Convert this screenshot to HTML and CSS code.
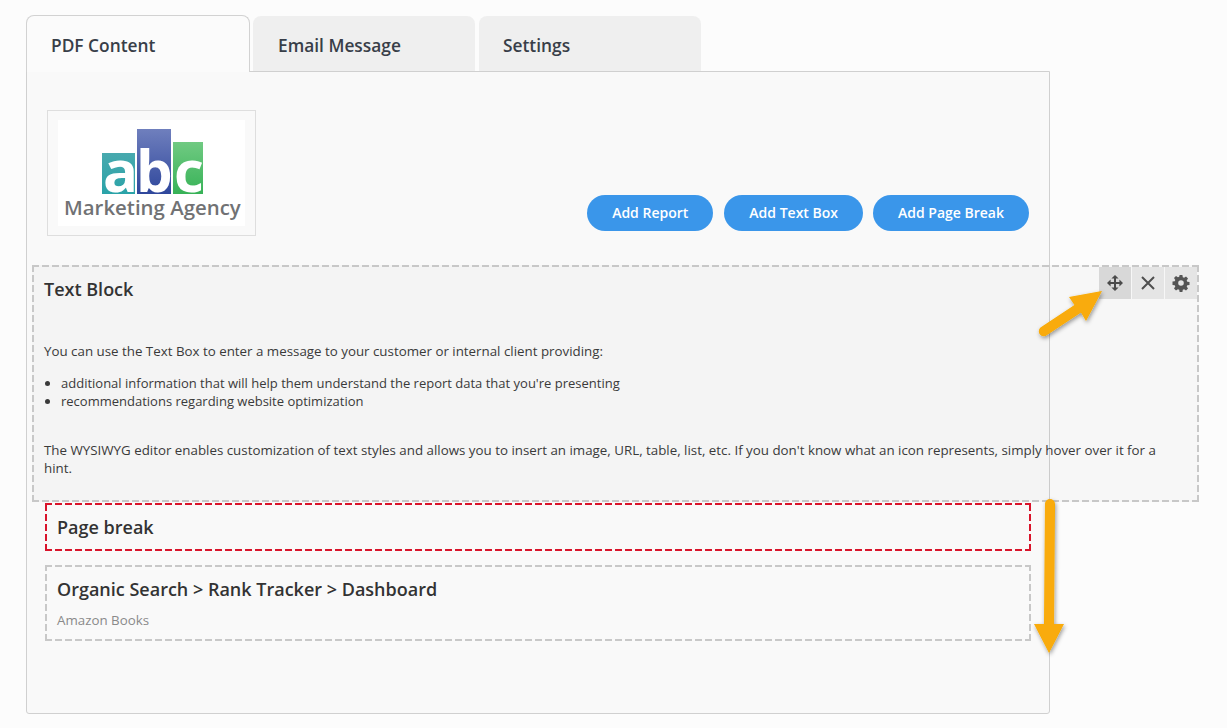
FILE: index.html
```html
<!DOCTYPE html>
<html lang="en">
<head>
    <meta charset="UTF-8">
    <meta name="viewport" content="width=device-width, initial-scale=1.0">
    <title>PDF Content</title>
    <link rel="stylesheet" href="styles.css">
</head>
<body>
    <div class="page">
        <div class="tabs">
            <div class="tab tab-active">PDF Content</div>
            <div class="tab">Email Message</div>
            <div class="tab">Settings</div>
        </div>

        <div class="panel">
            <div class="top-row">
                <div class="logo-box">
                    <svg class="logo" width="187" height="106" viewBox="58 120 187 106">
                        <defs>
                            <linearGradient id="teal" x1="0" y1="0" x2="0" y2="1">
                                <stop offset="0" stop-color="#48a9ae"/>
                                <stop offset="1" stop-color="#2aa3a8"/>
                            </linearGradient>
                            <linearGradient id="blue" x1="0" y1="0" x2="0" y2="1">
                                <stop offset="0" stop-color="#6f7fbd"/>
                                <stop offset="1" stop-color="#2f479c"/>
                            </linearGradient>
                            <linearGradient id="green" x1="0" y1="0" x2="0" y2="1">
                                <stop offset="0" stop-color="#70ca82"/>
                                <stop offset="1" stop-color="#37b257"/>
                            </linearGradient>
                        </defs>
                        <rect x="102" y="153" width="33" height="41" fill="url(#teal)"/>
                        <rect x="137" y="129" width="34" height="65" fill="url(#blue)"/>
                        <rect x="173" y="142" width="30" height="52" fill="url(#green)"/>
                        <text class="logo-abc" x="103" y="192">a<tspan dx="-2">b</tspan><tspan dx="1.300">c</tspan></text>
                        <text class="logo-name" x="64" y="215">Marketing Agency</text>
                    </svg>
                </div>
                <div class="actions">
                    <button class="btn">Add Report</button>
                    <button class="btn">Add Text Box</button>
                    <button class="btn">Add Page Break</button>
                </div>
            </div>

            <div class="block text-block">
                <div class="block-tools">
                    <div class="tool tool-on">
                        <svg width="18" height="18" viewBox="0 0 18 18"><path d="M9 1l3.600 3.600H10V8h3.400V5.400L17 9l-3.600 3.600V10H10v3.400h2.600L9 17l-3.600-3.600H8V10H4.600v2.600L1 9l3.600-3.600V8H8V4.600H5.400z" fill="#4a4a4a"/></svg>
                    </div>
                    <div class="tool">
                        <svg width="18" height="18" viewBox="0 0 18 18"><path d="M3 3l12 12M15 3L3 15" stroke="#4f4f4f" stroke-width="2" fill="none"/></svg>
                    </div>
                    <div class="tool">
                        <svg width="18" height="18" viewBox="0 0 18 18"><path fill-rule="evenodd" d="M7.600 1h2.800l.4 2.200 1.300.6 1.900-1.300 2 2-1.300 1.900.6 1.300 2.200.4v2.800l-2.200.4-.6 1.300 1.300 1.900-2 2-1.900-1.300-1.300.6-.4 2.200H7.600l-.4-2.200-1.300-.6-1.900 1.300-2-2 1.300-1.900-.6-1.300-2.200-.4V7.600l2.200-.4.6-1.300L2 4l2-2 1.900 1.300 1.300-.6zM9 6.200a2.800 2.800 0 1 0 0 5.600 2.800 2.800 0 0 0 0-5.600z" fill="#555"/></svg>
                    </div>
                </div>
                <h3 class="block-title">Text Block</h3>
                <p class="intro">You can use the Text Box to enter a message to your customer or internal client providing:</p>
                <ul class="points">
                    <li>additional information that will help them understand the report data that you're presenting</li>
                    <li>recommendations regarding website optimization</li>
                </ul>
                <p class="outro">The WYSIWYG editor enables customization of text styles and allows you to insert an image, URL, table, list, etc. If you don't know what an icon represents, simply hover over it for a hint.</p>
            </div>

            <div class="block page-break">
                <h3 class="block-title">Page break</h3>
            </div>

            <div class="block report-block">
                <h3 class="block-title">Organic Search &gt; Rank Tracker &gt; Dashboard</h3>
                <div class="report-site">Amazon Books</div>
            </div>
        </div>
    </div>

    <!-- Orange callout arrows drawn over the page -->
    <svg class="callouts" width="1227" height="728" viewBox="0 0 1227 728">
        <defs>
            <filter id="arrow-shadow" x="-40%" y="-40%" width="180%" height="180%">
                <feDropShadow dx="1" dy="2" stdDeviation="2" flood-color="#000" flood-opacity="0.4"/>
            </filter>
        </defs>
        <g filter="url(#arrow-shadow)" fill="#f9ab07">
            <path d="M1040.500 327.500l34-22.500-5.500-8 33-6-16 30-5-8.500-34 22.500a4.500 4.500 0 0 1-6.500-7.500z"/>
            <path d="M1045 504a5 5 0 0 1 10 0l-1 120h10l-15 29-15-29h10z"/>
        </g>
    </svg>
</body>
</html>
```

FILE: styles.css
```css
/* General */
body {
    margin: 0;
    background-color: #fcfcfc;
    font-family: "Open Sans", sans-serif;
    font-size: 13.33px;
    line-height: 18px;
    color: #3a3a3a;
}

.page {
    width: 1024px;
    height: 713px;
    padding: 15px 0 0 26px;
}

/* Tabs */
.tabs {
    display: flex;
    align-items: flex-end;
    height: 57px;
    margin-bottom: -1px;
    position: relative;
    z-index: 1;
}

.tab {
    box-sizing: border-box;
    width: 222px;
    height: 55px;
    margin-bottom: 1px;
    margin-right: 4px;
    padding: 17px 0 0 25px;
    background-color: #efefef;
    border-radius: 8px 8px 0 0;
    font-size: 17.33px;
    line-height: 24px;
    font-weight: 600;
    color: #383e48;
}

.tab:last-child {
    padding-left: 24px;
}

.tab-active {
    width: 224px;
    height: 57px;
    margin-bottom: 0;
    margin-right: 3px;
    padding-left: 24px;
    background-color: #fbfbfb;
    border: 1px solid #d2d2d2;
    border-bottom: none;
}

/* Panel */
.panel {
    box-sizing: border-box;
    height: 643px;
    padding: 38px 20px 0;
    background-color: #f9f9f9;
    border: 1px solid #d0d0d0;
    border-radius: 0 0 3px 3px;
}

.top-row {
    display: flex;
    justify-content: space-between;
    align-items: flex-end;
}

.logo-box {
    box-sizing: border-box;
    width: 209px;
    height: 126px;
    padding: 9px 10px;
    border: 1px solid #dedede;
}

.logo {
    display: block;
    background-color: #fff;
}

.logo-abc {
    font-size: 58px;
    font-weight: 700;
    fill: #fff;
}

.logo-name {
    font-size: 20.4px;
    font-weight: 600;
    fill: #717274;
}

.actions {
    display: flex;
    gap: 10px;
    margin-bottom: 5px;
}

.btn {
    height: 36px;
    padding: 0 25px 2px;
    background-color: #3a96ea;
    color: #fff;
    border: none;
    border-radius: 18px;
    font-family: "Open Sans", sans-serif;
    font-size: 14px;
    font-weight: 600;
}

.btn:first-child {
    margin-right: 1px;
}

/* Blocks: long dashes, which a plain dashed border does not give */
.block {
    --dash: #c8c8c8;
    box-sizing: border-box;
    position: relative;
    margin: 14px -2px 0;
    padding: 12px;
    background-image:
        repeating-linear-gradient(90deg, var(--dash) 0 7px, transparent 7px 10px),
        repeating-linear-gradient(90deg, var(--dash) 0 7px, transparent 7px 10px),
        repeating-linear-gradient(0deg, var(--dash) 0 7px, transparent 7px 10px),
        repeating-linear-gradient(0deg, var(--dash) 0 7px, transparent 7px 10px);
    background-size: 100% 2px, 100% 2px, 2px 100%, 2px 100%;
    background-position: top, bottom, left, right;
    background-repeat: no-repeat;
}

.block-title {
    margin: 0;
    font-size: 18px;
    line-height: 24px;
    font-weight: 600;
    color: #333;
}

.text-block {
    height: 237px;
    margin: 29px -170px 0 -15px;
    background-color: rgba(0, 0, 0, 0.02);
}

.intro {
    margin: 41px 0 14px;
}

.points {
    margin: 0;
    padding-left: 17px;
    font-size: 13px;
}

.outro {
    margin: 31px 0 0;
}

.block-tools {
    position: absolute;
    top: 2px;
    right: 2px;
    display: flex;
    gap: 1px;
}

.tool {
    display: flex;
    align-items: center;
    justify-content: center;
    width: 32px;
    height: 32px;
    background-color: #e5e5e5;
}

.tool-on {
    background-color: #d8d8d8;
}

.page-break {
    --dash: #d9142b;
    height: 48px;
    margin-top: 1px;
}

.report-block {
    height: 76px;
}

.report-site {
    margin-top: 10px;
    color: #8a8a8a;
}

/* Arrows */
.callouts {
    position: absolute;
    top: 0;
    left: 0;
    pointer-events: none;
}
```
